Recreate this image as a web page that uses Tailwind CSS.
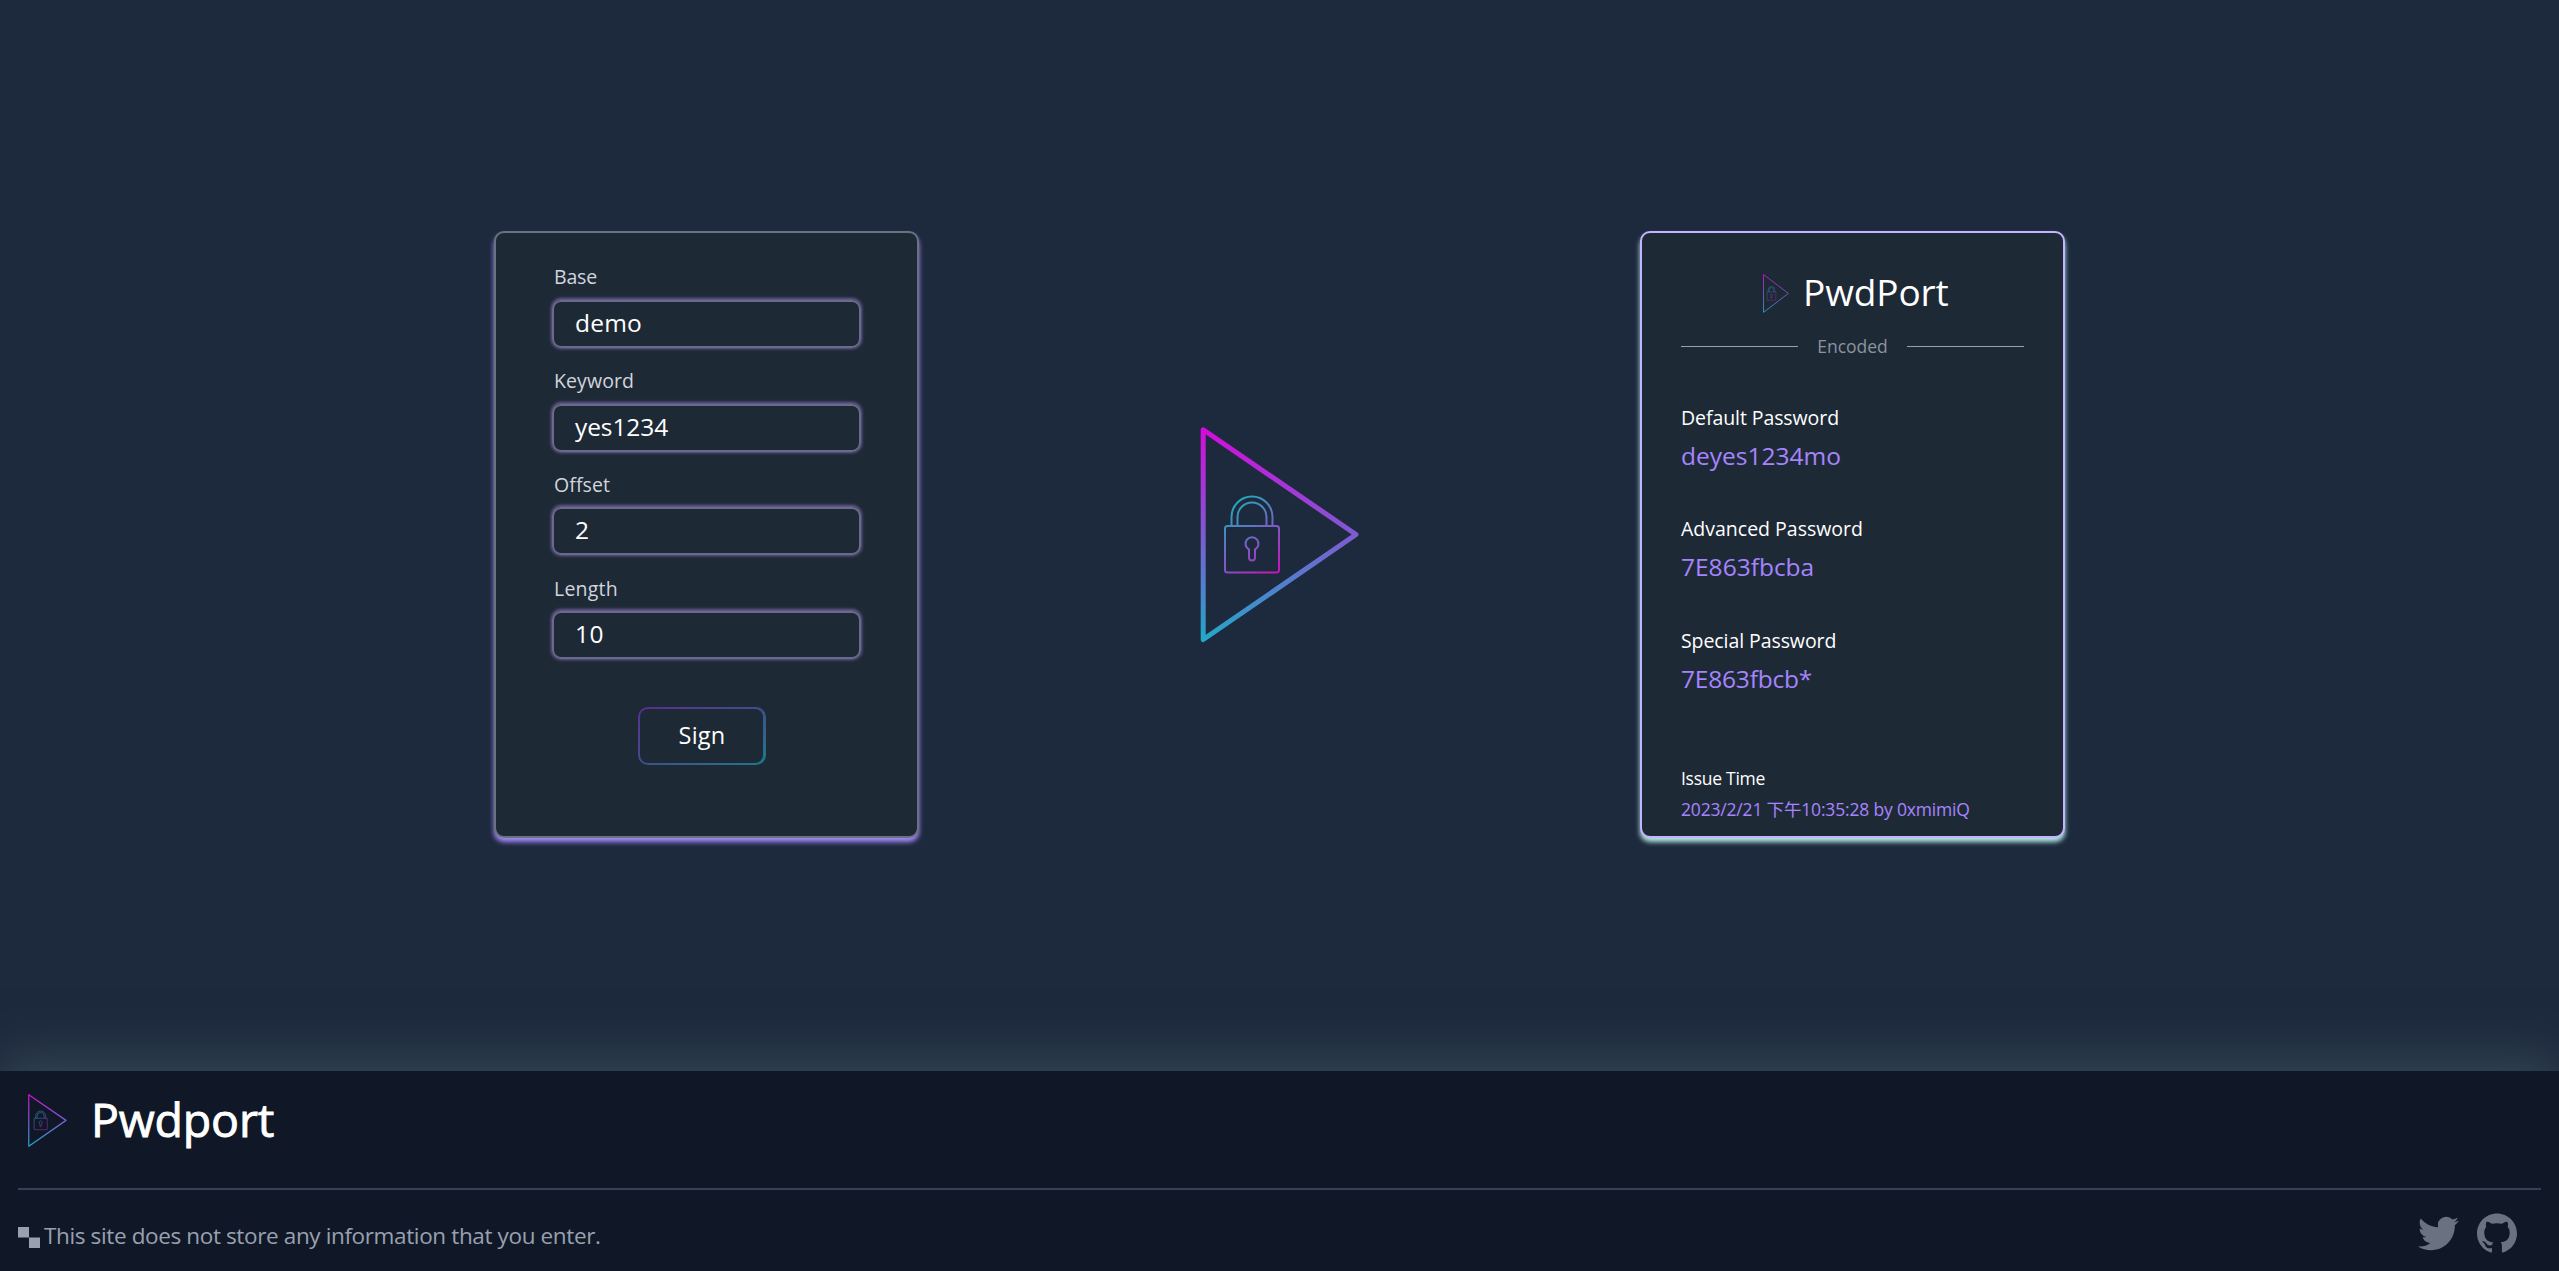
<!DOCTYPE html>
<html lang="en">
<head>
<meta charset="utf-8">
<title>Pwdport</title>
<script src="https://cdn.jsdelivr.net/npm/@tailwindcss/browser@4"></script>
</head>
<body class="flex h-[1271px] w-[2559px] flex-col overflow-hidden bg-slate-800 font-['Open_Sans','Noto_Sans_CJK_TC',sans-serif] text-white">

<svg class="absolute h-0 w-0" aria-hidden="true">
  <defs>
    <linearGradient id="tri" gradientUnits="userSpaceOnUse" x1="0" y1="2" x2="0" y2="214">
      <stop offset="0" stop-color="#d50bdc"/>
      <stop offset="0.5" stop-color="#7d5bd0"/>
      <stop offset="1" stop-color="#22a8c8"/>
    </linearGradient>
    <linearGradient id="lock" gradientUnits="userSpaceOnUse" x1="26" y1="76" x2="78" y2="146">
      <stop offset="0" stop-color="#1bb0b8"/>
      <stop offset="0.55" stop-color="#7b5cc4"/>
      <stop offset="1" stop-color="#c713b8"/>
    </linearGradient>
    <symbol id="logo" viewBox="0 0 160 216" preserveAspectRatio="none">
      <path d="M3.2 2.8 156 107.500 3.200 212.500Z" fill="none" stroke="url(#tri)" stroke-width="5" stroke-linejoin="round"/>
      <g fill="none" stroke="url(#lock)" stroke-width="2">
        <rect x="25" y="99" width="54" height="46.500" rx="2.500"/>
        <path d="M31.500 99V90a20.500 20.500 0 0 1 41 0V99"/>
        <path d="M37.500 99V90a14.500 14.500 0 0 1 29 0V99"/>
        <path d="M49 122.500a6.500 6.500 0 1 1 6 0V130.500a3 3 0 0 1-6 0Z"/>
      </g>
    </symbol>
  </defs>
</svg>

<main class="flex h-[1071px] shrink-0 items-start justify-between px-[494px] pt-[231px]">
  <form class="flex h-[607px] w-[425px] flex-col rounded-[10px] border-2 border-gray-500 bg-[#1e2936] px-[56px] pt-[30px] shadow-[0_4px_5px_#a78bfa]">
    <div class="flex flex-col gap-[18.75px]">
      <div class="flex flex-col">
        <label class="pl-[2px] text-[19.5px] leading-[28px] tracking-[-0.2px] text-gray-300">Base</label>
        <div class="mt-[9px] h-[48px] w-[309px] rounded-[9px] border-2 border-[#6b6a8d] pl-[21px] text-[24.5px] leading-[41px] tracking-[0.2px] shadow-[0_-0.5px_3px_1px_#6a5d92]">demo</div>
      </div>
      <div class="flex flex-col">
        <label class="pl-[2px] text-[19.5px] leading-[28px] tracking-[0.1px] text-gray-300">Keyword</label>
        <div class="mt-[9px] h-[48px] w-[309px] rounded-[9px] border-2 border-[#6b6a8d] pl-[21px] text-[24.5px] leading-[41px] tracking-[-0.1px] shadow-[0_-0.5px_3px_1px_#6a5d92]">yes1234</div>
      </div>
      <div class="flex flex-col">
        <label class="pl-[2px] text-[19.5px] leading-[28px] tracking-[0.1px] text-gray-300">Offset</label>
        <div class="mt-[8.5px] h-[48px] w-[309px] rounded-[9px] border-2 border-[#6b6a8d] pl-[21px] text-[24.5px] leading-[41px] shadow-[0_-0.5px_3px_1px_#6a5d92]">2</div>
      </div>
      <div class="flex flex-col">
        <label class="pt-px pl-[2px] text-[19.5px] leading-[28px] tracking-[0.2px] text-gray-300">Length</label>
        <div class="mt-[8.5px] h-[48px] w-[309px] rounded-[9px] border-2 border-[#6b6a8d] pl-[21px] text-[24.5px] leading-[42px] tracking-[0.6px] shadow-[0_-0.5px_3px_1px_#6a5d92]">10</div>
      </div>
    </div>
    <button type="button" class="mt-[48px] ml-[86px] h-[58px] w-[128px] rounded-[10px] bg-linear-to-br from-[#5b2a92] via-[#3c4f88] to-[#15798a] py-[2px] pr-[3px] pl-[2px]">
      <span class="block h-full rounded-[8px] bg-[#1e2936] pl-px text-[23.5px] leading-[53px] tracking-[0.2px]">Sign</span>
    </button>
  </form>

  <svg class="mt-[196px] h-[216px] w-[160px]"><use href="#logo"/></svg>

  <section class="flex h-[607px] w-[425px] flex-col rounded-[10px] border-2 border-violet-300 bg-[#1e2936] px-[39px] pt-[34px] shadow-[0_4px_5px_#b4ebe4]">
    <div class="flex h-[52px] items-center gap-[14px] pl-[82px]">
      <svg class="h-[39px] w-[26px]"><use href="#logo"/></svg>
      <h1 class="pb-[2px] text-[37px] leading-[50px] tracking-[-0.1px]">PwdPort</h1>
    </div>
    <div class="mt-[15px] flex h-[24px] items-center justify-between text-[17.5px] leading-[24px] text-[#8b939f]">
      <span class="h-px w-[117px] bg-gray-400"></span>
      <span>Encoded</span>
      <span class="h-px w-[117px] bg-gray-400"></span>
    </div>
    <div class="mt-[45.6px] flex flex-col gap-[41.5px]">
      <div class="flex flex-col gap-[6px]">
        <span class="text-[19.5px] leading-[28px] tracking-[-0.08px]">Default Password</span>
        <span class="text-[24.5px] leading-[36px] text-violet-400">deyes1234mo</span>
      </div>
      <div class="flex flex-col gap-[6px]">
        <span class="text-[19.5px] leading-[28px]">Advanced Password</span>
        <span class="text-[24.5px] leading-[36px] text-violet-400">7E863fbcba</span>
      </div>
      <div class="flex flex-col gap-[6px]">
        <span class="text-[19.5px] leading-[28px] tracking-[-0.08px]">Special Password</span>
        <span class="text-[24.5px] leading-[36px] tracking-[-0.2px] text-violet-400">7E863fbcb*</span>
      </div>
    </div>
    <div class="mt-[69.6px] flex flex-col gap-[7px] text-[17.5px] leading-[24px]">
      <span class="tracking-[-0.27px]">Issue Time</span>
      <span class="h-[24px] tracking-[-0.18px] whitespace-nowrap text-violet-400">2023/2/21 下午10:35:28 by 0xmimiQ</span>
    </div>
  </section>
</main>

<footer class="flex h-[200px] flex-col bg-gray-900 px-[18px] shadow-[0_-10px_50px_#374957]">
  <div class="mt-[13px] flex h-[72px] items-center gap-[24px] pl-[10px]">
    <svg class="h-[53px] w-[39px]"><use href="#logo"/></svg>
    <h2 class="pb-[2px] text-[46.5px] leading-[70px] font-medium tracking-[-0.2px] [-webkit-text-stroke:0.9px_white]">Pwdport</h2>
  </div>
  <div class="mt-[32px] h-[2px] bg-gray-700"></div>
  <div class="mt-[17px] flex h-[52px] items-center justify-between pr-[24px]">
    <p class="flex items-center gap-[4px] text-[22.5px] leading-[40px] tracking-[-0.37px] text-gray-400">
      <svg class="mt-[9px] h-[21px] w-[22px]" viewBox="0 0 22 21" fill="currentColor"><path d="M0 0h11v10.500H0zM11 10.500h11V21H11z"/></svg>
      <span class="pt-[5px]">This site does not store any information that you enter.</span>
    </p>
    <div class="flex items-center gap-[18px] text-gray-500">
      <svg class="h-[41px] w-[41px]" viewBox="0 0 24 24" fill="currentColor"><path d="M23.953 4.570a10 10 0 0 1-2.825.775 4.958 4.958 0 0 0 2.163-2.723c-.951.555-2.005.959-3.127 1.184a4.920 4.920 0 0 0-8.384 4.482C7.690 8.095 4.067 6.130 1.640 3.162a4.822 4.822 0 0 0-.666 2.475c0 1.710.870 3.213 2.188 4.096a4.904 4.904 0 0 1-2.228-.616v.060a4.923 4.923 0 0 0 3.946 4.827 4.996 4.996 0 0 1-2.212.085 4.936 4.936 0 0 0 4.604 3.417 9.867 9.867 0 0 1-6.102 2.105c-.390 0-.779-.023-1.170-.067a13.995 13.995 0 0 0 7.557 2.209c9.053 0 13.998-7.496 13.998-13.985 0-.210 0-.420-.015-.630A9.935 9.935 0 0 0 24 4.590z"/></svg>
      <svg class="h-[40px] w-[40px]" viewBox="0 0 24 24" fill="currentColor"><path d="M12 .297c-6.630 0-12 5.373-12 12 0 5.303 3.438 9.800 8.205 11.385.600.113.820-.258.820-.577 0-.285-.010-1.040-.015-2.040-3.338.724-4.042-1.610-4.042-1.610C4.422 18.070 3.633 17.700 3.633 17.700c-1.087-.744.084-.729.084-.729 1.205.084 1.838 1.236 1.838 1.236 1.070 1.835 2.809 1.305 3.495.998.108-.776.417-1.305.760-1.605-2.665-.300-5.466-1.332-5.466-5.930 0-1.310.465-2.380 1.235-3.220-.135-.303-.540-1.523.105-3.176 0 0 1.005-.322 3.300 1.230.960-.267 1.980-.399 3-.405 1.020.006 2.040.138 3 .405 2.280-1.552 3.285-1.230 3.285-1.230.645 1.653.240 2.873.120 3.176.765.840 1.230 1.910 1.230 3.220 0 4.610-2.805 5.625-5.475 5.920.420.360.810 1.096.810 2.220 0 1.606-.015 2.896-.015 3.286 0 .315.210.690.825.570C20.565 22.092 24 17.592 24 12.297c0-6.627-5.373-12-12-12"/></svg>
    </div>
  </div>
</footer>
</body>
</html>
